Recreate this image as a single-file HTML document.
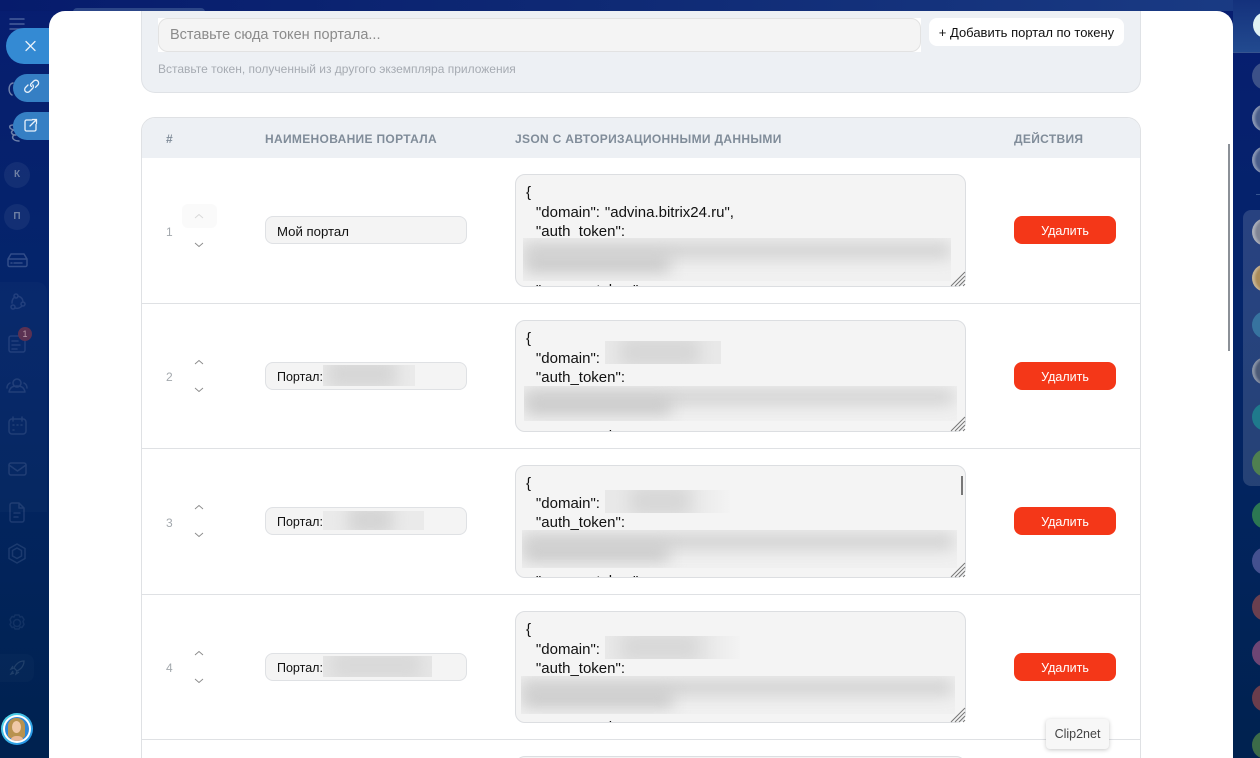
<!DOCTYPE html>
<html lang="ru"><head><meta charset="utf-8"><title>Порталы</title>
<style>
*{box-sizing:border-box}
html,body{margin:0;width:1260px;height:758px;overflow:hidden}
body{position:relative;font-family:"Liberation Sans","Noto Sans CJK SC",sans-serif;background:linear-gradient(180deg,#071d70 0%,#04256a 40%,#00224f 100%);color:#111}
.a{position:absolute}
.modal{left:49px;top:11px;width:1184px;height:760px;background:#fff;border-radius:16px 16px 0 0;overflow:hidden}
.pill{position:absolute;background:#348ad3;border-radius:18px 0 0 18px;right:auto}
.c{position:absolute;border-radius:50%;overflow:hidden}
.e{box-shadow:inset 3px 0 2px rgba(255,255,255,.35)}
.th{position:absolute;top:132px;font-size:12px;font-weight:bold;color:#808c99;letter-spacing:.32px;line-height:14px;white-space:nowrap}
.num{position:absolute;left:166px;font-size:12px;color:#a3a8ad;line-height:14px}
.inp{position:absolute;left:265px;width:202px;height:28px;background:#f4f4f4;border:1px solid #dfe1e4;border-radius:8px;font-size:12.5px;line-height:29px;padding-left:11px;color:#111;white-space:nowrap}
.del{position:absolute;left:1014px;width:102px;height:28px;background:#f43718;border-radius:8px;color:#fff;font-size:12.5px;line-height:30px;text-align:center}
.ta{position:absolute;left:515px;width:451px;height:112px;background:#f4f4f4;border:1px solid #dcdee1;border-radius:10px;overflow:hidden;font-size:15px;line-height:19.6px;padding:8px 0 0 10px;white-space:pre;color:#111;word-spacing:.8px}
.line{position:absolute;left:142px;width:998px;height:1px;background:#dfe1e4}
.blur{position:absolute;overflow:hidden;background:#f0f0f0}
.blur i{position:absolute;display:block;background:#c6c6c6;filter:blur(8px)}
svg{display:block;position:absolute;overflow:visible}
</style></head><body>

<!-- top strips -->
<div class="a" style="left:0;top:0;width:1260px;height:11px;background:linear-gradient(90deg,#061b6c,#0f2a75 50%,#1a3b84)"></div>
<div class="a" style="left:73px;top:8px;width:132px;height:4px;background:#2c4688;border-radius:6px 6px 0 0"></div>

<!-- left sidebar -->
<svg style="left:0;top:0" width="49" height="758" fill="none" stroke="#8a9fc8" stroke-width="1.5" stroke-linecap="round" stroke-linejoin="round">
 <g opacity=".5"><path d="M10 19h14M10 24h14M10 29h14"/></g>
 <g opacity=".7" stroke="#9aa9c4"><path d="M13 83c-5 1-5 10-1 12M13 125c-5 0-4 4 1 5M14 130c-4 1-3 5 2 5M14 135c-3 2-1 6 5 6"/></g>
 <g opacity=".28" stroke="#a8b8d8">
  <path d="M8 259l3-5h13l3 5v6a1.500 1.500 0 0 1-1.500 1.500h-16a1.500 1.500 0 0 1-1.500-1.500zM8 259h19M11 263h1M14 263h8"/>
 </g>
 <g opacity=".14" stroke="#b8c8e6">
  <circle cx="16" cy="296" r="2"/><circle cx="13" cy="307" r="2"/><circle cx="23" cy="304" r="2"/><path d="M12 303c0-3 1-5 3-6M18 296c3 1 5 3 5 6M15 308c3 1 5 0 7-2"/>
  <path d="M22 336h-11a2 2 0 0 0-2 2v12a2 2 0 0 0 2 2h12a2 2 0 0 0 2-2v-11M12 341h6M12 345h8M12 349h5"/>
  <circle cx="17" cy="383" r="4"/><path d="M9 392c1-5 4-6 8-6s7 1 8 6zM10 383c-2 1-3 3-3 5M24 383c2 1 3 3 3 5"/>
  <rect x="9" y="419" width="17" height="15" rx="3"/><path d="M13 417v4M22 417v4M13 425h1M17 425h1M21 425h1M13 430h1"/>
  <rect x="9" y="463" width="17" height="12" rx="2"/><path d="M9 465l8.500 6 8.500-6"/>
  <path d="M12 503h7l5 5v12a2 2 0 0 1-2 2h-10a2 2 0 0 1-2-2v-15a2 2 0 0 1 2-2zM19 503v5h5M14 513h6M14 517h4"/>
  <path d="M17 544l8 4.500v10l-8 4.500-8-4.500v-10z"/><path d="M17 548l4.500 2.500v5.500l-4.500 2.500-4.500-2.500v-5.500z"/>
 </g>
 <g opacity=".09" stroke="#b8c8e6">
  <circle cx="17" cy="623" r="3.500"/><path d="M15 615h4l1 2 2-.5 2 3-1 2 1 3-2 3-2-.5-1 2h-4l-1-2-2 .5-2-3 1-2-1-3 2-3 2 .5z"/>
 </g>
</svg>
<div class="a" style="left:0;top:282px;width:47px;height:230px;background:rgba(255,255,255,.018);border-radius:0 10px 0 0"></div>
<div class="c" style="left:4px;top:162px;width:26px;height:26px;background:rgba(255,255,255,.06);color:#6f80a4;font-size:10px;font-weight:bold;text-align:center;line-height:26px">К</div>
<div class="c" style="left:4px;top:204px;width:26px;height:26px;background:rgba(255,255,255,.06);color:#6f80a4;font-size:10px;font-weight:bold;text-align:center;line-height:26px">П</div>
<div class="c" style="left:18px;top:327px;width:14px;height:14px;background:#5a3152;color:#b89aa8;font-size:9px;text-align:center;line-height:14px">1</div>
<div class="a" style="left:0;top:654px;width:34px;height:28px;background:rgba(255,255,255,.02);border-radius:0 8px 8px 0"></div>
<svg style="left:9px;top:660px" width="16" height="16" fill="none" stroke="#2c4a72" stroke-width="1.300" opacity=".7"><path d="M15 1c-5 0-8 3-10 7l3 3c4-2 7-5 7-10zM5 8l-3 1 2-3M8 11l-1 3 3-2M4 11l-2 3 3-1"/></svg>

<!-- modal -->
<div class="a modal"></div>

<!-- pills -->
<div class="pill" style="left:6px;top:28px;width:43px;height:36px"></div>
<div class="pill" style="left:13px;top:74px;width:36px;height:28px;border-radius:14px 0 0 14px;background:#357fc4"></div>
<div class="pill" style="left:13px;top:112px;width:36px;height:28px;border-radius:14px 0 0 14px;background:#357fc4"></div>
<svg style="left:0;top:0" width="49" height="145" fill="none" stroke="#e8f1fa" stroke-width="1.300" stroke-linecap="round" stroke-linejoin="round">
 <path d="M26 41.500l9 9M35 41.500l-9 9"/>
 <path d="M29 85.500l-2.500 2.500a2.800 2.800 0 0 0 4 4l3-3a2.800 2.800 0 0 0 .3-3.700M32.500 87l-1-1a2.800 2.800 0 0 1 .3-1.500l3-3a2.800 2.800 0 0 1 4 4l-2.300 2.300" transform="translate(-1 -.5)"/>
 <path d="M32 120h-5.500a1.500 1.500 0 0 0-1.500 1.500v8a1.500 1.500 0 0 0 1.500 1.500h8a1.500 1.500 0 0 0 1.500-1.500v-5M30 126l6.500-6.500M32.500 119.500h4v4"/>
</svg>

<!-- avatar left -->
<div class="c" style="left:1px;top:713px;width:32px;height:32px;background:linear-gradient(135deg,#59e0e8,#1e88e5)"></div>
<div class="c" style="left:3px;top:715px;width:28px;height:28px;background:#fff"></div>
<div class="c" style="left:5px;top:717px;width:24px;height:24px;background:#2e86d8">
 <div class="a" style="left:3px;top:1px;width:17px;height:20px;background:#b8924f;border-radius:8px 8px 3px 3px"></div>
 <div class="c" style="left:7px;top:4px;width:9px;height:12px;background:#f0c8a8"></div>
 <div class="a" style="left:5px;top:19px;width:14px;height:6px;background:#e8b898;border-radius:6px 6px 0 0"></div>
</div>

<!-- right sidebar -->
<div class="a" style="left:1233px;top:0;width:27px;height:52px;background:linear-gradient(180deg,#14317c,#224a8f)"></div>
<div class="a" style="left:1233px;top:52px;width:27px;height:1px;background:#36548f"></div>
<div class="a" style="left:1243px;top:210px;width:17px;height:276px;background:rgba(255,255,255,.14);border-radius:8px 0 0 8px"></div>
<div class="a" style="left:1256px;top:194px;width:4px;height:1px;background:#36548f"></div>
<div class="c" style="left:1253px;top:12px;width:26px;height:26px;background:#dff2f4"></div>
<div class="c" style="left:1252px;top:62px;width:28px;height:28px;background:#3c5188"></div>
<div class="c e" style="left:1252px;top:104px;width:28px;height:28px;background:#4a5d8a"></div>
<div class="c e" style="left:1252px;top:146px;width:28px;height:28px;background:#4a5d8a"></div>
<div class="c e" style="left:1252px;top:218px;width:28px;height:28px;background:#7f8494"></div>
<div class="c e" style="left:1252px;top:264px;width:28px;height:28px;background:#a98b5a"></div>
<div class="c" style="left:1252px;top:311px;width:28px;height:28px;background:#37739f"></div>
<div class="c e" style="left:1252px;top:357px;width:28px;height:28px;background:#4b5a76"></div>
<div class="c" style="left:1252px;top:403px;width:28px;height:28px;background:#1f7a8c"></div>
<div class="c" style="left:1252px;top:449px;width:28px;height:28px;background:#4f8050"></div>
<div class="c" style="left:1252px;top:501px;width:28px;height:28px;background:#2c7752"></div>
<div class="c" style="left:1252px;top:547px;width:28px;height:28px;background:#44508f"></div>
<div class="c" style="left:1252px;top:593px;width:28px;height:28px;background:#6a3f4f"></div>
<div class="c" style="left:1252px;top:639px;width:28px;height:28px;background:#6e4574"></div>
<div class="c" style="left:1252px;top:684px;width:28px;height:28px;background:#6a3d4c"></div>
<div class="c" style="left:1252px;top:731px;width:28px;height:28px;background:#3c6b48"></div>

<!-- scrollbar -->
<div class="a" style="left:1228px;top:144px;width:2px;height:207px;background:#8b9097"></div>

<!-- token panel -->
<div class="a" style="left:141px;top:11px;width:1000px;height:82px;background:#edf0f4;border:1px solid #dfe2e6;border-top:0;border-radius:0 0 14px 14px"></div>
<div class="a" style="left:158px;top:18px;width:763px;height:34px;background:#fff"></div>
<div class="a" style="left:158px;top:18px;width:763px;height:34px;background:#f4f4f4;border:1px solid #e2e2e2;border-radius:10px;font-size:14.5px;line-height:33px;padding-left:11px;color:#8b8b8b">Вставьте сюда токен портала...</div>
<div class="a" style="left:929px;top:18px;width:195px;height:28px;background:#fff;border-radius:8px;font-size:13px;line-height:30px;text-align:center;color:#111">+ Добавить портал по токену</div>
<div class="a" style="left:158px;top:62px;font-size:12px;line-height:15px;color:#a6abb2;white-space:nowrap">Вставьте токен, полученный из другого экземпляра приложения</div>

<!-- table -->
<div class="a" style="left:141px;top:117px;width:1000px;height:660px;border:1px solid #dfe1e4;border-radius:14px 14px 0 0"></div>
<div class="a" style="left:142px;top:118px;width:998px;height:40px;background:#edf0f4;border-radius:13px 13px 0 0"></div>
<div class="th" style="left:166px">#</div>
<div class="th" style="left:265px">НАИМЕНОВАНИЕ ПОРТАЛА</div>
<div class="th" style="left:515px">JSON С АВТОРИЗАЦИОННЫМИ ДАННЫМИ</div>
<div class="th" style="left:1014px">ДЕЙСТВИЯ</div>
<div class="line" style="top:303px"></div>
<div class="line" style="top:448px"></div>
<div class="line" style="top:594px"></div>
<div class="line" style="top:739px"></div>

<!-- row numbers -->
<div class="num" style="top:225px">1</div>
<div class="num" style="top:370px">2</div>
<div class="num" style="top:516px">3</div>
<div class="num" style="top:661px">4</div>

<!-- arrows -->
<div class="a" style="left:182px;top:204px;width:35px;height:24px;background:#fafafa;border-radius:6px"></div>
<svg style="left:0;top:0" width="240" height="700" fill="none" stroke="#8a8a8a" stroke-width=".9">
 <path d="M195 218l4-3.500 4 3.500" stroke="#d8d8d8"/><path d="M195 243l4 3.500 4-3.500"/>
 <path d="M195 364l4-3.500 4 3.500"/><path d="M195 388l4 3.500 4-3.500"/>
 <path d="M195 509l4-3.500 4 3.500"/><path d="M195 533l4 3.500 4-3.500"/>
 <path d="M195 655l4-3.500 4 3.500"/><path d="M195 679l4 3.500 4-3.500"/>
</svg>

<!-- name inputs -->
<div class="inp" style="top:216px;font-size:13.200px">Мой портал</div>
<div class="inp" style="top:362px">Портал:</div>
<div class="inp" style="top:507px">Портал:</div>
<div class="inp" style="top:653px">Портал:</div>
<div class="blur" style="left:323px;top:365px;width:92px;height:21px;background:#eaeaea"><i style="left:4px;top:-6px;width:70px;height:30px;opacity:.55"></i></div>
<div class="blur" style="left:323px;top:511px;width:101px;height:19px;background:#eaeaea"><i style="left:25px;top:-6px;width:45px;height:30px;opacity:.6"></i></div>
<div class="blur" style="left:323px;top:656px;width:109px;height:21px;background:#e6e6e6"><i style="left:8px;top:-6px;width:90px;height:30px;opacity:.4"></i></div>

<!-- textareas -->
<div class="ta" style="top:174px;height:113px">{
  "domain": "advina.bitrix24.ru",
  "auth_token":
  
  
  "access_token":</div>
<div class="ta" style="top:320px">{
  "domain":
  "auth_token":
  
  
  "access_token":</div>
<div class="ta" style="top:465px;height:113px">{
  "domain":
  "auth_token":
  
  
  "access_token":</div>
<div class="ta" style="top:611px">{
  "domain":
  "auth_token":
  
  
  "access_token":</div>
<div class="ta" style="top:756px;height:30px"></div>

<!-- blurred patches -->
<div class="blur" style="left:523px;top:238px;width:428px;height:43px">
 <i style="left:0;top:5px;width:428px;height:15px;opacity:.8"></i><i style="left:2px;top:18px;width:145px;height:16px"></i></div>
<div class="blur" style="left:605px;top:341px;width:116px;height:23px;background:#e8e8e8"><i style="left:15px;top:-4px;width:80px;height:30px;opacity:.5"></i></div>
<div class="blur" style="left:524px;top:386px;width:433px;height:35px">
 <i style="left:0;top:4px;width:430px;height:14px;opacity:.8"></i><i style="left:2px;top:13px;width:145px;height:15px"></i></div>
<div class="blur" style="left:605px;top:490px;width:125px;height:23px;background:linear-gradient(90deg,#e8e8e8 70%,#f3f3f3)"><i style="left:25px;top:-4px;width:60px;height:30px;opacity:.5"></i></div>
<div class="blur" style="left:522px;top:530px;width:435px;height:38px">
 <i style="left:0;top:4px;width:432px;height:15px;opacity:.8"></i><i style="left:2px;top:16px;width:145px;height:15px"></i></div>
<div class="blur" style="left:605px;top:636px;width:135px;height:23px;background:linear-gradient(90deg,#e8e8e8 75%,#f3f3f3)"><i style="left:15px;top:-4px;width:80px;height:30px;opacity:.45"></i></div>
<div class="blur" style="left:521px;top:676px;width:434px;height:38px">
 <i style="left:0;top:4px;width:432px;height:15px;opacity:.8"></i><i style="left:2px;top:16px;width:150px;height:15px"></i></div>

<!-- textarea scrollbar row 3 -->
<div class="a" style="left:961px;top:476px;width:2px;height:19px;background:#777"></div>

<!-- resize handles -->
<svg style="left:0;top:0" width="970" height="730" fill="none" stroke="#777" stroke-width="1">
 <path d="M951 286l14-14M955 286l10-10M959 286l6-6M963 286l2-2"/>
 <path d="M951 431l14-14M955 431l10-10M959 431l6-6M963 431l2-2"/>
 <path d="M951 577l14-14M955 577l10-10M959 577l6-6M963 577l2-2"/>
 <path d="M951 722l14-14M955 722l10-10M959 722l6-6M963 722l2-2"/>
</svg>

<!-- delete buttons -->
<div class="del" style="top:216px">Удалить</div>
<div class="del" style="top:362px">Удалить</div>
<div class="del" style="top:507px">Удалить</div>
<div class="del" style="top:653px">Удалить</div>

<!-- tooltip -->
<div class="a" style="left:1046px;top:719px;width:63px;height:30px;background:#f7f7f7;border-radius:4px;box-shadow:0 1px 4px rgba(0,0,0,.22);font-size:12.500px;line-height:30px;text-align:center;color:#444">Clip2net</div>
</body></html>
